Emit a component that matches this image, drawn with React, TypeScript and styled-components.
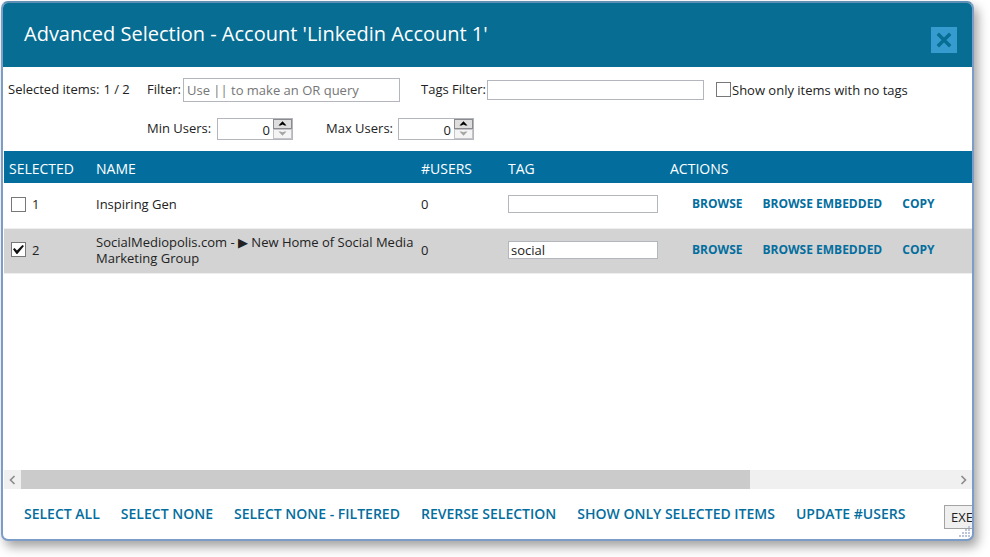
import React, { useState } from 'react';
import styled, { createGlobalStyle } from 'styled-components';

const GlobalStyle = createGlobalStyle`
  *, *::before, *::after { box-sizing: border-box; }
  body {
    margin: 0;
    background: #fff;
    overflow: hidden;
    color: #222;
    font-family: "Segoe UI", "Open Sans", "Noto Sans", sans-serif;
    font-size: 13px;
    line-height: 16px;
  }
  input, button { font: inherit; color: inherit; margin: 0; }
`;

const Page = styled.div`
  display: flex;
  height: 100vh;
  padding: 1px 16px 16px 1px;
`;

const Dialog = styled.main`
  position: relative;
  display: flex;
  flex: 1;
  flex-direction: column;
  min-width: 0;
  overflow: hidden;
  background: #fff;
  border: 2px solid #7c9dc8;
  border-top-color: #5f8fb5;
  border-radius: 7px;
  box-shadow: 4px 6px 11px rgba(0, 0, 0, 0.36);
`;

const TitleBar = styled.header`
  display: flex;
  justify-content: space-between;
  height: 64px;
  padding: 0 15px 0 21px;
  background: #076d92;
  color: #fff;
`;

const Title = styled.h1`
  margin: 18px 0 0;
  font-size: 20px;
  line-height: 26px;
  font-weight: 400;
`;

const CloseButton = styled.button`
  display: grid;
  place-items: center;
  width: 26px;
  height: 26px;
  margin-top: 24px;
  padding: 0;
  border: 0;
  background: #369cd0;
  color: #076d92;
`;

const Filters = styled.section`
  display: flex;
  height: 84px;
  padding: 10px 0 0 5px;
`;

const Summary = styled.div`
  display: flex;
  flex: none;
  gap: 4px;
  width: 139px;
  padding-top: 4px;
`;

const FilterRows = styled.div`
  display: flex;
  flex: 1;
  flex-direction: column;
  gap: 14px;
`;

const FilterRow = styled.div`
  display: flex;
  align-items: center;
  height: 25px;
`;

const FieldLabel = styled.label<{ $width: number }>`
  flex: none;
  width: ${(p) => p.$width}px;
  padding-bottom: 2px;
  white-space: nowrap;
`;

const TextBox = styled.input<{ $tall?: boolean }>`
  width: 217px;
  height: ${(p) => (p.$tall ? 24 : 20)}px;
  margin-right: ${(p) => (p.$tall ? 21 : 12)}px;
  padding: 0 3px;
  border: 1px solid #b4b6bd;
  background: #fff;
  outline: 0;
  &::placeholder { color: #767676; opacity: 1; }
`;

const CheckLabel = styled.label`
  display: flex;
  align-items: center;
  gap: 1px;
  white-space: nowrap;
`;

const Tick = styled.input`
  display: grid;
  place-items: center;
  flex: none;
  appearance: none;
  width: 15px;
  height: 15px;
  border: 1px solid #777;
  background: #fff;
  &:checked::after {
    content: "";
    width: 11px;
    height: 9px;
    background: #111;
    clip-path: polygon(0 46%, 14% 34%, 36% 62%, 86% 0, 100% 12%, 40% 100%, 32% 100%);
  }
`;

const Spinner = styled.div`
  display: flex;
  width: 76px;
  height: 22px;
  margin-right: 33px;
  border: 1px solid #b4b6bd;
`;

const SpinValue = styled.input`
  flex: 1;
  min-width: 0;
  padding: 2px 3px 0 0;
  border: 0;
  outline: 0;
  background: transparent;
  text-align: right;
`;

const SpinButtons = styled.div`
  display: flex;
  flex: none;
  flex-direction: column;
  width: 19px;
`;

const SpinButton = styled.button<{ $muted?: boolean }>`
  display: grid;
  place-items: center;
  flex: 1;
  min-height: 0;
  padding: 0;
  border: 1px solid ${(p) => (p.$muted ? '#c4c4c8' : '#8b8b8f')};
  background: ${(p) => (p.$muted ? '#f4f4f4' : '#dedede')};
  color: ${(p) => (p.$muted ? '#a5a5a5' : '#000')};
`;

const TableArea = styled.section`
  flex: 1;
  min-height: 0;
  padding-left: 1px;
  overflow: hidden;
`;

const Table = styled.table`
  width: 100%;
  table-layout: fixed;
  border-collapse: collapse;
`;

const Column = styled.col<{ $width?: number }>`
  width: ${(p) => (p.$width ? `${p.$width}px` : 'auto')};
`;

const HeadCell = styled.th`
  height: 32px;
  padding: 4px 0 0 5px;
  background: #036e9e;
  color: #fff;
  font-size: 14px;
  font-weight: 400;
  text-align: left;
`;

const Row = styled.tr<{ $selected: boolean }>`
  height: 45px;
  background: ${(p) => (p.$selected ? '#d3d3d3' : '#fff')};
  border-bottom: 1px solid #efefef;
`;

const Cell = styled.td`
  padding: 0 0 2px 5px;
  vertical-align: middle;
`;

const SelectLabel = styled.label`
  display: flex;
  align-items: center;
  gap: 6px;
  padding-left: 2px;
`;

const TagInput = styled.input`
  display: block;
  width: 150px;
  height: 18px;
  padding: 0 2px;
  border: 1px solid #b4b6bd;
  background: #fff;
  outline: 0;
`;

const ButtonRow = styled.div`
  display: flex;
  gap: 20px;
  padding-left: 22px;
`;

const TextButton = styled.button<{ $large?: boolean }>`
  flex: none;
  padding: 0;
  border: 0;
  background: none;
  color: #036e9e;
  font-size: ${(p) => (p.$large ? 14 : 12)}px;
  font-weight: ${(p) => (p.$large ? 600 : 700)};
  white-space: nowrap;
`;

const ScrollBar = styled.div`
  display: flex;
  flex: none;
  height: 19px;
  margin-left: 1px;
  background: #f0f0f0;
`;

const ScrollButton = styled.button`
  display: grid;
  place-items: center;
  flex: none;
  width: 17px;
  padding: 0;
  border: 0;
  background: none;
  color: #8a8a8a;
`;

const ScrollTrack = styled.div`
  flex: 1;
`;

const ScrollThumb = styled.div`
  width: 78%;
  height: 100%;
  background: #cbcbcb;
`;

const Footer = styled.footer`
  display: flex;
  flex: none;
  align-items: center;
  gap: 21px;
  height: 50px;
  padding-left: 21px;
  overflow: hidden;
`;

const ExecuteButton = styled.button`
  flex: none;
  width: 80px;
  height: 24px;
  margin: 5px -52px 0 auto;
  padding: 0 6px;
  border: 1px solid #a3a3a3;
  background: #efefef;
  text-align: left;
`;

const Grip = styled.svg`
  position: absolute;
  right: 1px;
  bottom: 1px;
`;

const CloseIcon = () => (
  <svg width="16" height="16" viewBox="0 0 16 16" aria-hidden="true">
    <path d="M3 3 L13 13 M13 3 L3 13" stroke="currentColor" strokeWidth="3.4" strokeLinecap="square" />
  </svg>
);

const Triangle = ({ down }: { down?: boolean }) => (
  <svg width="9" height="5" viewBox="0 0 9 5" aria-hidden="true">
    <path d={down ? 'M0.5 0.5 L4.5 4.8 L8.5 0.5 L6.5 0.5 L4.5 1.2 L2.5 0.5 Z' : 'M0.5 4.5 L4.5 0.2 L8.5 4.5 L6.5 4.5 L4.5 3.6 L2.5 4.5 Z'} fill="currentColor" />
  </svg>
);

const Chevron = ({ right }: { right?: boolean }) => (
  <svg width="7" height="10" viewBox="0 0 7 10" aria-hidden="true">
    <path d={right ? 'M1.5 1 L5.5 5 L1.5 9' : 'M5.5 1 L1.5 5 L5.5 9'} fill="none" stroke="currentColor" strokeWidth="1.6" />
  </svg>
);

const gripDots = [[9, 0], [6, 3], [9, 3], [3, 6], [6, 6], [9, 6], [0, 9], [3, 9], [6, 9], [9, 9]];

const ResizeGrip = () => (
  <Grip width="12" height="12" viewBox="0 0 12 12" aria-hidden="true">
    {gripDots.map(([x, y]) => (
      <rect key={`${x}-${y}`} x={x} y={y} width="2" height="2" fill="#bcc5dc" />
    ))}
  </Grip>
);

function UserCount({ id, label, labelWidth }: { id: string; label: string; labelWidth: number }) {
  const [count, setCount] = useState(0);
  return (
    <>
      <FieldLabel htmlFor={id} $width={labelWidth}>{label}</FieldLabel>
      <Spinner>
        <SpinValue id={id} inputMode="numeric" value={count} onChange={(e) => setCount(Number(e.target.value) || 0)} />
        <SpinButtons>
          <SpinButton type="button" aria-label={`Increase ${id}`} onClick={() => setCount(count + 1)}>
            <Triangle />
          </SpinButton>
          <SpinButton type="button" $muted={count === 0} aria-label={`Decrease ${id}`} onClick={() => setCount(Math.max(0, count - 1))}>
            <Triangle down />
          </SpinButton>
        </SpinButtons>
      </Spinner>
    </>
  );
}

const groups = [
  { id: 1, name: 'Inspiring Gen', users: 0, tag: '' },
  { id: 2, name: 'SocialMediopolis.com - ▶ New Home of Social Media Marketing Group', users: 0, tag: 'social' },
];

const rowActions = ['BROWSE', 'BROWSE EMBEDDED', 'COPY'];

const bulkActions = [
  'SELECT ALL',
  'SELECT NONE',
  'SELECT NONE - FILTERED',
  'REVERSE SELECTION',
  'SHOW ONLY SELECTED ITEMS',
  'UPDATE #USERS',
];

export default function App() {
  const [selected, setSelected] = useState<number[]>([2]);
  const toggle = (id: number) =>
    setSelected((ids) => (ids.includes(id) ? ids.filter((i) => i !== id) : [...ids, id]));

  return (
    <>
      <GlobalStyle />
      <Page>
        <Dialog>
          <TitleBar>
            <Title>Advanced Selection - Account 'Linkedin Account 1'</Title>
            <CloseButton type="button" aria-label="Close"><CloseIcon /></CloseButton>
          </TitleBar>

          <Filters>
            <Summary>
              <span>Selected items:</span>
              <span>{selected.length} / {groups.length}</span>
            </Summary>
            <FilterRows>
              <FilterRow>
                <FieldLabel htmlFor="filter" $width={36}>Filter:</FieldLabel>
                <TextBox id="filter" $tall placeholder="Use || to make an OR query" />
                <FieldLabel htmlFor="tags" $width={66}>Tags Filter:</FieldLabel>
                <TextBox id="tags" />
                <CheckLabel><Tick type="checkbox" />Show only items with no tags</CheckLabel>
              </FilterRow>
              <FilterRow>
                <UserCount id="min-users" label="Min Users:" labelWidth={70} />
                <UserCount id="max-users" label="Max Users:" labelWidth={72} />
              </FilterRow>
            </FilterRows>
          </Filters>

          <TableArea>
            <Table>
              <colgroup>
                <Column $width={87} />
                <Column $width={325} />
                <Column $width={87} />
                <Column $width={162} />
                <Column />
              </colgroup>
              <thead>
                <tr>
                  <HeadCell>SELECTED</HeadCell>
                  <HeadCell>NAME</HeadCell>
                  <HeadCell>#USERS</HeadCell>
                  <HeadCell>TAG</HeadCell>
                  <HeadCell>ACTIONS</HeadCell>
                </tr>
              </thead>
              <tbody>
                {groups.map((g) => (
                  <Row key={g.id} $selected={selected.includes(g.id)}>
                    <Cell>
                      <SelectLabel>
                        <Tick type="checkbox" checked={selected.includes(g.id)} onChange={() => toggle(g.id)} />
                        {g.id}
                      </SelectLabel>
                    </Cell>
                    <Cell>{g.name}</Cell>
                    <Cell>{g.users}</Cell>
                    <Cell><TagInput aria-label={`Tag for ${g.name}`} defaultValue={g.tag} /></Cell>
                    <Cell>
                      <ButtonRow>
                        {rowActions.map((a) => <TextButton key={a} type="button">{a}</TextButton>)}
                      </ButtonRow>
                    </Cell>
                  </Row>
                ))}
              </tbody>
            </Table>
          </TableArea>

          <ScrollBar>
            <ScrollButton type="button" aria-label="Scroll left"><Chevron /></ScrollButton>
            <ScrollTrack><ScrollThumb /></ScrollTrack>
            <ScrollButton type="button" aria-label="Scroll right"><Chevron right /></ScrollButton>
          </ScrollBar>

          <Footer>
            {bulkActions.map((a) => <TextButton key={a} type="button" $large>{a}</TextButton>)}
            <ExecuteButton type="button">EXE</ExecuteButton>
          </Footer>
          <ResizeGrip />
        </Dialog>
      </Page>
    </>
  );
}
